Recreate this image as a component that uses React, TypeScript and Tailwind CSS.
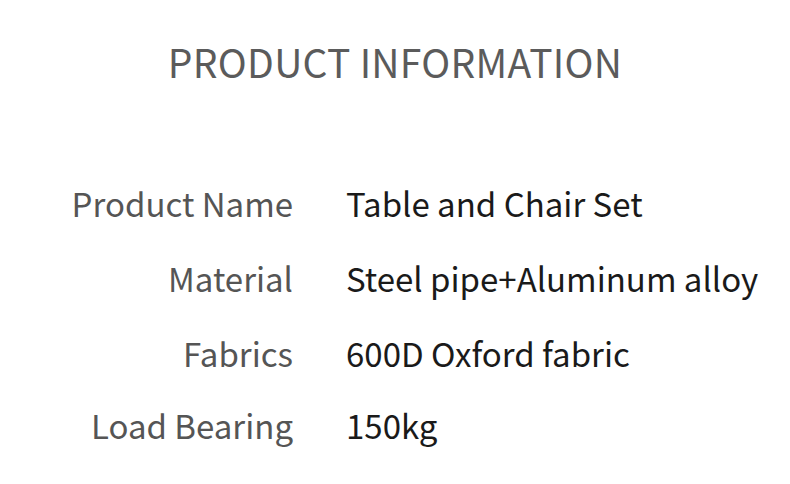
const rows = [
  { label: "Product Name", value: "Table and Chair Set", gap: "mt-0" },
  { label: "Material", value: "Steel pipe+Aluminum alloy", gap: "mt-[23px]" },
  { label: "Fabrics", value: "600D Oxford fabric", gap: "mt-[23px]" },
  { label: "Load Bearing", value: "150kg", gap: "mt-[20px]" },
];

export default function App() {
  return (
    <div
      className="h-[484px] w-[790px] bg-white"
      style={{ fontFamily: '"Noto Sans CJK SC", "Noto Sans", sans-serif' }}
    >
      <h1 className="pt-[35px] text-center text-[39px] leading-[52px] tracking-[0.3px] text-[#5b5b5b]">
        PRODUCT INFORMATION
      </h1>
      <div className="mt-[90px] flex flex-col">
        {rows.map((row) => (
          <div key={row.label} className={`${row.gap} flex items-center text-[33px] leading-[52px]`}>
            <span className="w-[293px] text-right text-[#555555]">{row.label}</span>
            <span className="ml-[53px] text-[#1a1a1a]">{row.value}</span>
          </div>
        ))}
      </div>
    </div>
  );
}
